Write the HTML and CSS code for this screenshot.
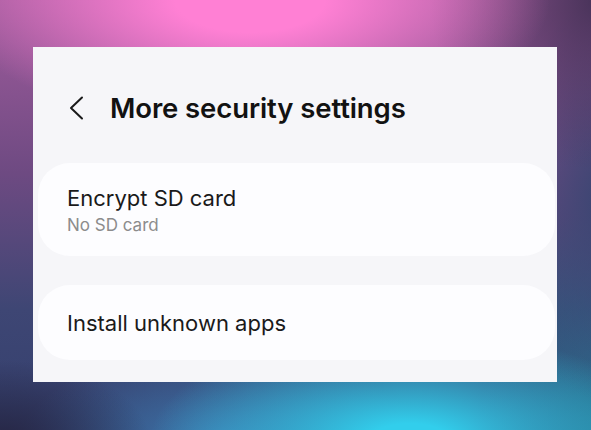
FILE: index.html
```html
<!DOCTYPE html>
<html>
<head>
<meta charset="utf-8">
<link rel="stylesheet" href="styles.css">
</head>
<body>
<div class="panel">
  <div class="header">
    <svg class="back" width="16" height="24" viewBox="0 0 16 24"><path d="M14 1.5 L3 12 L14 22.5" fill="none" stroke="#1a1a1a" stroke-width="2" stroke-linecap="round" stroke-linejoin="round"/></svg>
    <h1 class="title">More security settings</h1>
  </div>
  <div class="list">
    <div class="card card-tall">
      <div class="item-title">Encrypt SD card</div>
      <div class="item-sub">No SD card</div>
    </div>
    <div class="card card-short">
      <div class="item-title">Install unknown apps</div>
    </div>
  </div>
</div>
</body>
</html>
```
FILE: styles.css
```css
html, body {
  margin: 0;
  height: 100%;
}
body {
  width: 591px;
  height: 430px;
  overflow: hidden;
  box-sizing: border-box;
  padding: 47px 34px 48px 33px;
  font-family: Inter, "Open Sans", sans-serif;
  background:
    radial-gradient(ellipse 300px 130px at 250px 0px, rgba(255,128,212,1) 25%, rgba(255,128,212,0) 100%),
    radial-gradient(ellipse 260px 110px at 410px 440px, rgba(50,206,236,1) 15%, rgba(50,206,236,0) 100%),
    radial-gradient(ellipse 150px 80px at 0px 440px, rgba(38,38,68,1), rgba(38,38,68,0) 100%),
    radial-gradient(ellipse 200px 90px at 220px 440px, rgba(62,125,180,0.9), rgba(62,125,180,0) 100%),
    radial-gradient(ellipse 170px 170px at 600px 0px, rgba(70,50,88,1), rgba(70,50,88,0) 100%),
    radial-gradient(ellipse 90px 200px at 600px 200px, rgba(60,70,115,1), rgba(60,70,115,0) 100%),
    radial-gradient(ellipse 120px 220px at 600px 430px, rgba(40,115,145,1), rgba(40,115,145,0) 100%),
    linear-gradient(180deg, #a25c9d 0%, #6e4a82 40%, #3e4674 72%, #34406e 100%);
}
.panel {
  width: 524px;
  height: 335px;
  background: #f6f6f9;
  box-sizing: border-box;
  padding: 0 2px 0 5px;
  display: flex;
  flex-direction: column;
}
.header {
  height: 116px;
  display: flex;
  align-items: center;
  padding: 6px 0 0 30px;
  box-sizing: border-box;
}
.back {
  display: block;
  margin-right: 26px;
}
.title {
  margin: 0;
  font-size: 27.5px;
  font-weight: 600;
  color: #121212;
  letter-spacing: -0.1px;
}
.list {
  display: flex;
  flex-direction: column;
  gap: 29px;
}
.card {
  background: #fdfdff;
  border-radius: 32px;
  padding-left: 29px;
  box-sizing: border-box;
  display: flex;
  flex-direction: column;
  justify-content: center;
}
.card-tall { height: 93px; }
.card-short { height: 75px; }
.item-title {
  font-size: 22px;
  color: #1a1a1a;
  line-height: 28px;
}
.item-sub {
  font-size: 17px;
  color: #8c8c8c;
  line-height: 22px;
  margin-top: 2px;
}
```
